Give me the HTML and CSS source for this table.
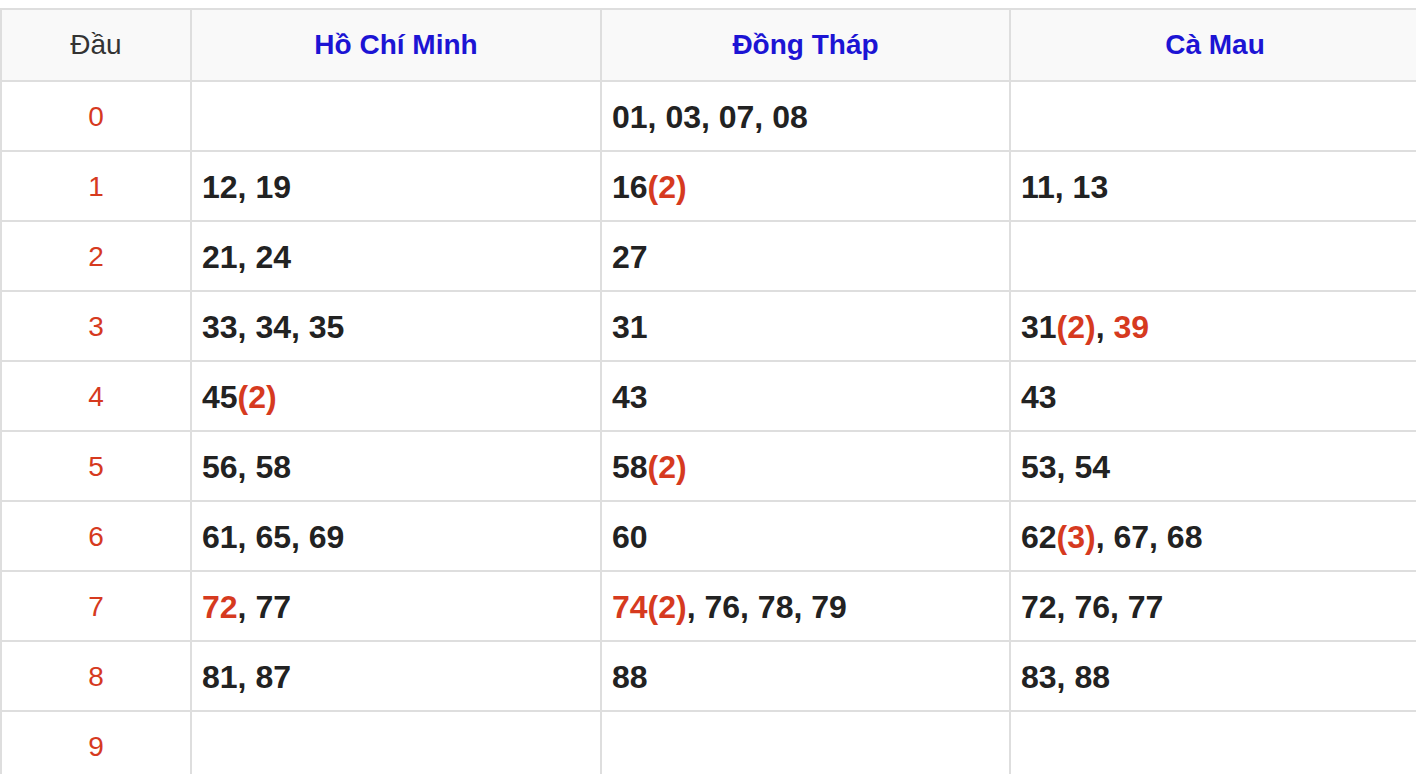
FILE: index.html
```html
<!DOCTYPE html>
<html>
<head>
<meta charset="utf-8">
<link rel="stylesheet" href="styles.css">
</head>
<body>
<table class="loto">
  <colgroup>
    <col class="c-head">
    <col class="c-prov">
    <col class="c-prov c-narrow">
    <col class="c-prov">
  </colgroup>
  <thead>
    <tr>
      <th class="dau">Đầu</th>
      <th class="prov">Hồ Chí Minh</th>
      <th class="prov">Đồng Tháp</th>
      <th class="prov">Cà Mau</th>
    </tr>
  </thead>
  <tbody>
    <tr><td class="num">0</td><td></td><td>01, 03, 07, 08</td><td></td></tr>
    <tr><td class="num">1</td><td>12, 19</td><td>16<span class="r">(2)</span></td><td>11, 13</td></tr>
    <tr><td class="num">2</td><td>21, 24</td><td>27</td><td></td></tr>
    <tr><td class="num">3</td><td>33, 34, 35</td><td>31</td><td>31<span class="r">(2)</span>, <span class="r">39</span></td></tr>
    <tr><td class="num">4</td><td>45<span class="r">(2)</span></td><td>43</td><td>43</td></tr>
    <tr><td class="num">5</td><td>56, 58</td><td>58<span class="r">(2)</span></td><td>53, 54</td></tr>
    <tr><td class="num">6</td><td>61, 65, 69</td><td>60</td><td>62<span class="r">(3)</span>, 67, 68</td></tr>
    <tr><td class="num">7</td><td><span class="r">72</span>, 77</td><td><span class="r">74(2)</span>, 76, 78, 79</td><td>72, 76, 77</td></tr>
    <tr><td class="num">8</td><td>81, 87</td><td>88</td><td>83, 88</td></tr>
    <tr><td class="num">9</td><td></td><td></td><td></td></tr>
  </tbody>
</table>
</body>
</html>
```
FILE: styles.css
```css
html, body {
  margin: 0;
  padding: 0;
  background: #fff;
  overflow: hidden;
}
body {
  padding-top: 8px;
  font-family: "Liberation Sans", Arial, Helvetica, sans-serif;
}
.loto {
  border-collapse: collapse;
  table-layout: fixed;
  width: 1421px;
  border: 2px solid #dedede;
}
.c-head { width: 190px; }
.c-prov { width: 410px; }
.c-narrow { width: 409px; }
.loto th,
.loto td {
  border: 2px solid #dedede;
  padding: 2px 0 0 10px;
  height: 66px;
  vertical-align: middle;
  text-align: left;
  font-size: 32px;
  font-weight: bold;
  color: #222;
  white-space: nowrap;
}
.loto thead th {
  background: #f9f9f9;
  text-align: center;
  font-size: 28px;
  height: 70px;
  padding: 0;
}
.loto th.dau {
  font-weight: normal;
  color: #333;
}
.loto th.prov {
  color: #1c14d4;
}
.loto td.num {
  text-align: center;
  padding: 2px 0 0 0;
  font-size: 28px;
  font-weight: normal;
  color: #d63a1f;
}
.r {
  color: #d63a1f;
}
```
